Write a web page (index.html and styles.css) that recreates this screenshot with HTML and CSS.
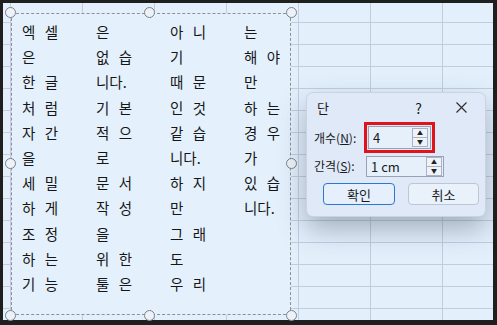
FILE: index.html
```html
<!DOCTYPE html>
<html>
<head>
<meta charset="utf-8">
<title>단 설정</title>
<link rel="stylesheet" href="styles.css">
</head>
<body>
<div class="sheet">
  <div class="textbox">
    <div class="cols">
      <span>엑 셀</span><span>은</span><span>한 글</span><span>처 럼</span><span>자 간</span><span>을</span><span>세 밀</span><span>하 게</span><span>조 정</span><span>하 는</span><span>기 능</span>
      <span>은</span><span>없 습</span><span>니다.</span><span>기 본</span><span>적 으</span><span>로</span><span>문 서</span><span>작 성</span><span>을</span><span>위 한</span><span>툴 은</span>
      <span>아 니</span><span>기</span><span>때 문</span><span>인 것</span><span>같 습</span><span>니다.</span><span>하 지</span><span>만</span><span>그 래</span><span>도</span><span>우 리</span>
      <span>는</span><span>해 야</span><span>만</span><span>하 는</span><span>경 우</span><span>가</span><span>있 습</span><span>니다.</span>
    </div>
    <i class="handle h-tl"></i><i class="handle h-tc"></i><i class="handle h-tr"></i>
    <i class="handle h-ml"></i><i class="handle h-mr"></i>
    <i class="handle h-bl"></i><i class="handle h-bc"></i><i class="handle h-br"></i>
  </div>

  <div class="dialog">
    <div class="title">
      <span class="title-text">단</span>
      <span class="help">?</span>
      <svg class="close" width="11" height="11" viewBox="0 0 11 11"><path d="M0.5 0.5L10.5 10.5M10.5 0.5L0.5 10.5" stroke="#2b2b2b" stroke-width="1.1" fill="none"/></svg>
    </div>
    <div class="row row-count">
      <label class="lbl lbl-count">개수(<u>N</u>):</label>
      <div class="focus">
        <div class="field field-count">
          <span class="val">4</span>
          <div class="spin"><b>&#9650;</b><b>&#9660;</b></div>
        </div>
      </div>
    </div>
    <div class="row row-gap">
      <label class="lbl lbl-gap">간격(<u>S</u>):</label>
      <div class="field field-gap">
        <span class="val">1&nbsp;cm</span>
        <div class="spin"><b>&#9650;</b><b>&#9660;</b></div>
      </div>
    </div>
    <div class="btns">
      <button type="button" class="btn btn-ok">확인</button>
      <button type="button" class="btn btn-cancel">취소</button>
    </div>
  </div>
</div>
</body>
</html>
```

FILE: styles.css
```css
html,body {
  margin: 0;
  padding: 0;
  width: 100%;
  height: 100%;
  background: #1f1f1f;
  overflow: hidden;
  font-family: "Noto Sans CJK KR", "Noto Sans", sans-serif;
  color: #1b1b1b;
}
.sheet {
  position: relative;
  margin: 3px 0 0 3px;
  width: 490px;
  height: 317px;
  background-color: #e3f0fc;
  background-image:
    linear-gradient(to right, #c2cde0 1px, transparent 1px),
    linear-gradient(to bottom, #c2cde0 1px, transparent 1px);
  background-size: 72px 22px;
  background-position: 7px 19px;
}
/* 텍스트 상자 */
.textbox {
  position: absolute;
  left: 8px;
  top: 10px;
  width: 280px;
  height: 302px;
  border: 1px dashed #8b9099;
  background: #e4f1fd;
  box-sizing: border-box;
}
.cols {
  display: grid;
  grid-template-columns: repeat(4, 36px);
  grid-template-rows: repeat(11, 25.2px);
  grid-auto-flow: column;
  column-gap: 38px;
  padding: 5px 0 0 10px;
  font-size: 14.5px;
  line-height: 25.2px;
  color: #161616;
}
.cols span {
  text-align: justify;
  text-align-last: justify;
  white-space: nowrap;
}
.handle {
  position: absolute;
  width: 9px;
  height: 9px;
  border: 1.5px solid #7c818b;
  border-radius: 50%;
  background: #edf2f8;
}
.h-tl { left: -7px; top: -7px; }
.h-tc { left: 132px; top: -7px; }
.h-tr { right: -7px; top: -7px; }
.h-ml { left: -7px; top: 144px; }
.h-mr { right: -7px; top: 144px; }
.h-bl { left: -7px; bottom: -7px; }
.h-bc { left: 132px; bottom: -7px; }
.h-br { right: -7px; bottom: -7px; }

/* 단 대화상자 */
.dialog {
  position: absolute;
  left: 303px;
  top: 89px;
  width: 180px;
  height: 125px;
  box-sizing: border-box;
  padding: 0 0 0 7px;
  background: #dfe9f7;
  border: 1px solid #c9d3e2;
  border-radius: 7px;
  box-shadow: 0 12px 28px rgba(40,50,70,0.35);
  font-size: 12px;
}
.title {
  display: flex;
  align-items: center;
  height: 29px;
  padding-left: 3px;
  font-size: 13px;
}
.title-text {
  flex: 1;
}
.help {
  font-size: 14px;
  margin-right: 34px;
}
.close {
  margin-right: 18px;
}
.row {
  display: flex;
  align-items: center;
}
.lbl {
  white-space: nowrap;
}
.lbl-count { width: 50px; }
.lbl-gap { width: 52px; }
.focus {
  border: 3px solid #e0121a;
  padding: 1px;
}
.field {
  display: flex;
  align-items: center;
  justify-content: space-between;
  box-sizing: border-box;
  border: 1px solid #98a2b3;
  background: #e6f0fb;
  font-size: 13px;
  padding-left: 4px;
}
.field-count {
  width: 63px;
  height: 23px;
  padding-right: 2px;
}
.field-gap {
  width: 78px;
  height: 21px;
  padding-right: 1px;
  margin-top: 3px;
}
.spin {
  display: flex;
  flex-direction: column;
  width: 14px;
  border: 1px solid #a9b3c3;
  background: #eef3fa;
}
.spin b {
  display: block;
  height: 8px;
  line-height: 8px;
  font-size: 6px;
  text-align: center;
  font-weight: normal;
  color: #222;
}
.spin b + b {
  border-top: 1px solid #a9b3c3;
}
.btns {
  display: flex;
  gap: 13px;
  padding-left: 9px;
  margin-top: 6px;
}
.btn {
  width: 72px;
  height: 22px;
  padding: 0;
  border-radius: 4px;
  font-family: inherit;
  font-size: 13px;
  color: #1b1b1b;
}
.btn-ok {
  background: #e5f0fc;
  border: 1px solid #2a78d4;
}
.btn-cancel {
  width: 71px;
  background: #e9f1fb;
  border: 1px solid #bcc6d4;
}
```
